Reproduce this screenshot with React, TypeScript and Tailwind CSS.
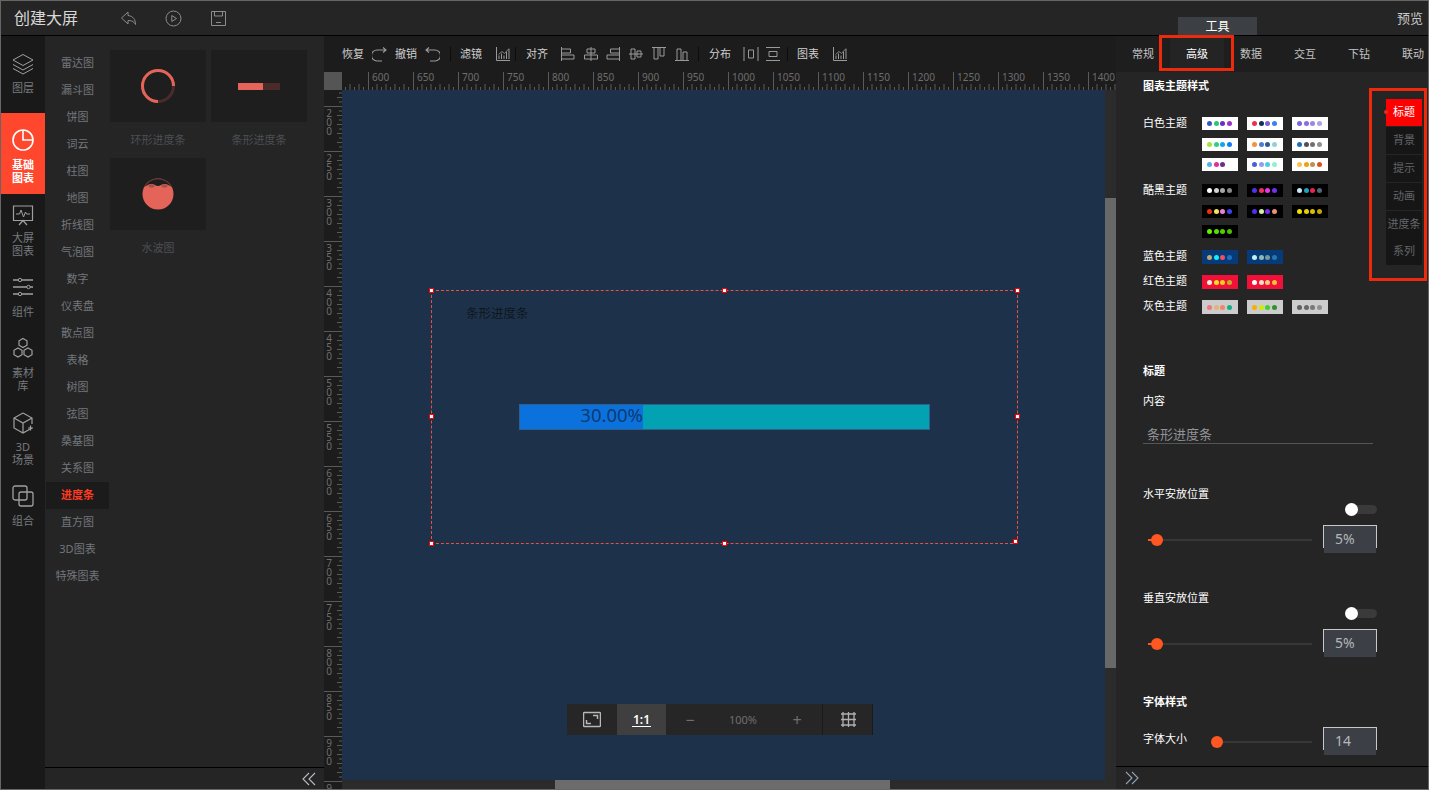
import React from "react";

type IconProps = { className?: string; children: React.ReactNode; size?: number; box?: number };
const Ico = ({ className = "", children, size = 16, box = 16 }: IconProps) => (
  <svg width={size} height={size} viewBox={`0 0 ${box} ${box}`} fill="none" stroke="currentColor" strokeWidth={1} className={`shrink-0 ${className}`}>
    {children}
  </svg>
);

const ChartIco = ({ className = "" }: { className?: string }) => (
  <Ico className={className}>
    <path d="M1.5 1v13.5H15" />
    <path d="M4 13V9.5M6.5 13V7.5M9 13V9.5M11.5 13V6M14 13V3" />
    <path d="M3.5 8.5 7 5.5l2.5 2L14 2.5" strokeWidth={0.8} />
  </Ico>
);

const Sep = ({ className }: { className: string }) => <div className={`h-[14px] w-px bg-[#0c0c0c] shrink-0 ${className}`} />;
const Tb = ({ children, className = "" }: { children: React.ReactNode; className?: string }) => (
  <span className={`text-[11px] leading-[14px] text-[#cfcfcf] shrink-0 ${className}`}>{children}</span>
);

const railItems: { label: string[]; cls: string; gap: string; active?: boolean; icon: React.ReactNode }[] = [
  {
    label: ["图层"], cls: "h-[77px] pt-[16px]", gap: "mt-[5px]",
    icon: (
      <Ico size={24} box={24}>
        <path d="M12 2.5 22 8l-10 5.5L2 8z" />
        <path d="M2 12.5 12 18l10-5.5" />
        <path d="M2 16.5 12 22l10-5.5" />
      </Ico>
    ),
  },
  {
    label: ["基础", "图表"], cls: "h-[81px] pt-[15px]", gap: "mt-[6px]", active: true,
    icon: (
      <Ico size={24} box={24} className="text-white">
        <circle cx="12" cy="12" r="10" strokeWidth={1.6} />
        <path d="M12 2v10h10" strokeWidth={1.6} />
      </Ico>
    ),
  },
  {
    label: ["大屏", "图表"], cls: "h-[72px] pt-[9px]", gap: "mt-[4px]",
    icon: (
      <Ico size={24} box={24}>
        <path d="M2.5 3h19v14.5h-19z" strokeWidth={1.2} />
        <path d="M5 11h3.5l1.5-4 2.5 7 2-5 1 2H19" />
        <path d="M8 22l4-4.5 4 4.5" strokeWidth={1.2} />
      </Ico>
    ),
  },
  {
    label: ["组件"], cls: "h-[64px] pt-[9px]", gap: "mt-[6px]",
    icon: (
      <Ico size={24} box={24}>
        <path d="M2 5h5.5M10.5 5H22M2 12h14M19 12h3M2 19h5.5M10.5 19H22" strokeWidth={1.3} />
        <circle cx="9" cy="5" r="1.7" />
        <circle cx="17.5" cy="12" r="1.7" />
        <circle cx="9" cy="19" r="1.7" />
      </Ico>
    ),
  },
  {
    label: ["素材", "库"], cls: "h-[75px] pt-[6px]", gap: "mt-[6px]",
    icon: (
      <Ico size={24} box={24}>
        <path d="M12 2.5l4 2.3v4.4l-4 2.3-4-2.3V4.800z" strokeWidth={1.2} />
        <path d="M7 12l4 2.300v4.400l-4 2.300-4-2.300v-4.400z" strokeWidth={1.2} />
        <path d="M17 12l4 2.300v4.400l-4 2.300-4-2.300v-4.400z" strokeWidth={1.2} />
      </Ico>
    ),
  },
  {
    label: ["3D", "场景"], cls: "h-[73px] pt-[6px]", gap: "mt-[5px]",
    icon: (
      <Ico size={24} box={24}>
        <path d="M12 2 21 7v6M21 17l-9 5-9-5V7l9-5" strokeWidth={1.2} />
        <path d="M3 7l9 5 9-5M12 12v10" strokeWidth={1.2} />
        <path d="M19.500 14.500v5M17 17h5" strokeWidth={1.2} />
      </Ico>
    ),
  },
  {
    label: ["组合"], cls: "flex-1 pt-[6px]", gap: "mt-[6px]",
    icon: (
      <Ico size={24} box={24}>
        <rect x="2" y="2" width="14" height="14" rx="2" strokeWidth={1.3} />
        <rect x="8" y="8" width="14" height="14" rx="2" strokeWidth={1.3} />
      </Ico>
    ),
  },
];

const chartTypes = ["雷达图", "漏斗图", "饼图", "词云", "柱图", "地图", "折线图", "气泡图", "数字", "仪表盘", "散点图", "表格", "树图", "弦图", "桑基图", "关系图", "进度条", "直方图", "3D图表", "特殊图表"];

const Ring = () => (
  <svg width="36" height="36" viewBox="0 0 36 36" fill="none">
    <circle cx="18" cy="18" r="15.500" stroke="#4a2b2a" strokeWidth="3" />
    <path d="M18 33.500A15.500 15.500 0 1 1 33.500 18" stroke="#e5645a" strokeWidth="3" />
  </svg>
);
const Wave = () => (
  <svg width="32" height="32" viewBox="0 0 32 32">
    <circle cx="16" cy="16" r="15.500" fill="#e5645a" />
    <path d="M2.600 8.500A15.500 15.500 0 0 1 29.400 8.500C27.500 8 25.500 6 22.500 6S18.500 8 16 8 12.500 6 9.500 6 4.500 8 2.600 8.500z" fill="#1e1e1e" />
    <ellipse cx="9.500" cy="8" rx="3" ry="1.700" fill="#a0534c" />
    <ellipse cx="22.500" cy="8" rx="3" ry="1.700" fill="#a0534c" />
    <path d="M2.600 8.500A15.500 15.500 0 0 1 29.400 8.500" fill="none" stroke="#6a3a37" />
  </svg>
);

const palette: string[][][] = [
  [
    ["#3f51c8", "#2fc47a", "#6b2fc0", "#a031c8"], ["#ee3050", "#12305a", "#7b5fd8", "#3d7ff0"], ["#7b68d8", "#8a6ee0", "#9a88e0", "#b0a0e8"],
    ["#a8e040", "#30d080", "#10a8e8", "#1080f0"], ["#f59040", "#4a80c8", "#2a5a98", "#90d0d8"], ["#1a70b8", "#505058", "#707078", "#909090"],
    ["#50b0e8", "#e03090", "#6a2f88"], ["#4a60d8", "#90a0f0", "#50c8e8", "#90f0d0"], ["#f8c050", "#f0a010", "#c09050", "#d85020"],
  ],
  [
    ["#ffffff", "#d0d0d0", "#a8a8a8", "#888888"], ["#5030f0", "#f03060", "#f030f0", "#7030f0"], ["#c8e8f8", "#20a0c0", "#f02050", "#506878"],
    ["#f03010", "#f8e060", "#f080d0", "#4040f0"], ["#5030f0", "#d0f0a0", "#7030f0", "#f09070"], ["#f0e000", "#e8d000", "#d8c000", "#c0a800"],
    ["#60f000", "#58e000", "#50d000", "#48c000"],
  ],
  [["#c0a870", "#10f0f8", "#f05060", "#2070c0"], ["#c0f0f0", "#90b8b8", "#789898", "#2878b0"]],
  [["#fff0d0", "#f8e020", "#e8d020", "#c0b020"], ["#ffffff", "#ffe0c0", "#ffd080", "#ffc040"]],
  [["#f07878", "#e8b080", "#f08868", "#10b080"], ["#f8b000", "#c8f000", "#40d030", "#309030"], ["#606060", "#686868", "#787878", "#909090"]],
];
const themes = [
  { name: "白色主题", bg: "bg-white", cls: "h-[54px]", sw: "h-[13px]" },
  { name: "酷黑主题", bg: "bg-black", cls: "mt-[13px] h-[54px]", sw: "h-[13px]" },
  { name: "蓝色主题", bg: "bg-[#063a78]", cls: "mt-[12px] h-[14px]", sw: "h-[14px]" },
  { name: "红色主题", bg: "bg-[#f01038]", cls: "mt-[11px] h-[14px]", sw: "h-[14px]" },
  { name: "灰色主题", bg: "bg-[#cccccc]", cls: "mt-[11px] h-[14px]", sw: "h-[14px]" },
];

const Toggle = ({ className }: { className: string }) => (
  <div className={`flex justify-end w-[234px] ${className}`}>
    <div className="relative w-[25px] h-[13px] flex items-center">
      <div className="w-full h-[9px] rounded-full bg-[#3a3a3a]" />
      <div className="absolute -left-[7px] top-0 w-[13px] h-[13px] rounded-full bg-white" />
    </div>
  </div>
);
const NumBox = ({ value }: { value: string }) => (
  <div className="w-[54px] shrink-0 flex flex-col">
    <div className="h-[23px] bg-[#3c3f45] border-t border-x border-[#c8c8c8] pl-[11px] text-[14px] leading-[26px] text-[#b4b8bc]">{value}</div>
    <div className="h-[5px] mx-px bg-[#3c3f45]" />
  </div>
);
const Slider = ({ className, knob, fill }: { className: string; knob: string; fill?: boolean }) => (
  <div className={`relative h-[30px] flex items-center ${className}`}>
    <div className="w-full h-[2px] bg-[#373737]" />
    {fill && <div className="absolute left-0 top-[14px] w-[9px] h-[2px] bg-[#ff5722]" />}
    <div className={`absolute top-[9px] w-[12px] h-[12px] rounded-full bg-[#ff5722] ${knob}`} />
  </div>
);

const sideNav = ["背景", "提示", "动画"];

const majorsTop = Array.from({ length: 17 }, (_, i) => 600 + i * 50);
const majorsLeft = Array.from({ length: 16 }, (_, i) => 200 + i * 50);

const TopRuler = () => {
  const ticks: React.ReactNode[] = [];
  for (let i = 0; i < 180; i++) {
    const x = 26 - 27 + i * 4.5;
    if (x < 0 || i % 10 === 6) continue;
    const long = i % 2 === 0;
    ticks.push(<line key={i} x1={x} x2={x} y1={long ? 12 : 15} y2={18} stroke="#5a5a5a" />);
  }
  return (
    <svg width="774" height="18" className="block">
      {ticks}
      {majorsTop.map((v) => {
        const x = 26 + (v - 600) * 0.9 + 0.5;
        return (
          <g key={v}>
            <line x1={x} x2={x} y1={0} y2={18} stroke="#5a5a5a" />
            <text x={x + 3.5} y={8.5} fontSize={10} fill="#6e6e6e" fontFamily="'Noto Sans', sans-serif">{v}</text>
          </g>
        );
      })}
    </svg>
  );
};
const LeftRuler = () => {
  const ticks: React.ReactNode[] = [];
  for (let i = 0; i < 160; i++) {
    const y = -29 + i * 4.5 + 0.5;
    if (y < 0 || i % 10 === 0) continue;
    const long = i % 2 === 0;
    ticks.push(<line key={i} y1={y} y2={y} x1={long ? 13 : 15} x2={18} stroke="#5a5a5a" />);
  }
  return (
    <svg width="18" height="700" className="block">
      {ticks}
      {majorsLeft.map((v) => {
        const y = 16 + (v - 200) * 0.9 + 0.5;
        return (
          <g key={v}>
            <line y1={y} y2={y} x1={0} x2={18} stroke="#5a5a5a" />
            {String(v).split("").map((d, i) => (
              <text key={i} x={5} y={y + 10.5 + i * 9} fontSize={10} textAnchor="middle" fill="#6e6e6e" fontFamily="'Noto Sans', sans-serif">{d}</text>
            ))}
          </g>
        );
      })}
    </svg>
  );
};

const Handle = ({ className }: { className: string }) => (
  <div className={`absolute w-[5px] h-[5px] bg-white border border-[#ff0000] ${className}`} />
);

export default function App() {
  return (
    <div className="w-[1429px] h-[790px] border border-[#666666] bg-[#252525] flex flex-col overflow-hidden relative font-['Noto_Sans','Noto_Sans_CJK_SC',sans-serif]">
      {/* Header */}
      <header className="h-[35px] shrink-0 border-b border-black bg-[#252525] flex items-center text-[#8c8c8c]">
        <div className="ml-[13px] w-[64px] text-[16px] leading-[20px] text-[#d8d8d8]">创建大屏</div>
        <Ico size={17} box={17} className="ml-[42px]">
          <path d="M8 2 1.500 8 8 14v-3.500c3 0 5.500.5 7.500 4 0-5-2.500-8.500-7.500-9z" />
        </Ico>
        <Ico size={17} box={17} className="ml-[28px]">
          <circle cx="8.500" cy="8.500" r="7.500" />
          <path d="M6.800 5.500 11.500 8.500 6.800 11.500z" />
        </Ico>
        <Ico size={15} box={15} className="ml-[29px]">
          <path d="M.5.500h14v14H.5z" />
          <path d="M3.500.500v4.500h8V.500M5 11.500h5" />
        </Ico>
        <div className="flex-1" />
        <div className="self-end mr-[140px] w-[79px] h-[18px] bg-[#3c3f43] text-[12px] leading-[19px] text-white text-center">工具</div>
        <div className="mr-[5px] text-[13px] leading-[18px] text-[#c8c8c8] -mt-[1px]">预览</div>
      </header>

      <div className="flex-1 flex min-h-0">
        {/* Rail */}
        <nav className="w-[44px] shrink-0 bg-[#191919] flex flex-col">
          {railItems.map((it) => (
            <div key={it.label.join("")} className={`${it.cls} flex flex-col items-center shrink-0 ${it.active ? "bg-[#ff472d] text-white" : "text-[#a0a0a0]"}`}>
              {it.icon}
              <div className={`${it.gap} text-[11px] leading-[13px] text-center ${it.active ? "font-semibold text-white" : "text-[#777a7e]"}`}>
                {it.label.map((l) => <div key={l}>{l}</div>)}
              </div>
            </div>
          ))}
        </nav>

        {/* Chart library */}
        <aside className="w-[279px] shrink-0 bg-[#252525] flex flex-col">
          <div className="flex-1 flex min-h-0">
            <ul className="w-[64px] shrink-0 pt-[14px] pl-px">
              {chartTypes.map((c) => (
                <li key={c} className={`h-[27px] flex items-center justify-center text-[11px] ${c === "进度条" ? "bg-[#1b1b1b] text-[#ff3a20] font-semibold" : "text-[#73777c]"}`}>{c}</li>
              ))}
            </ul>
            <div className="pt-[14px] pl-px grid grid-cols-[96px_96px] gap-x-[5px] auto-rows-[108px]">
              <div>
                <div className="h-[72px] bg-[#1e1e1e] flex items-center justify-center"><Ring /></div>
                <div className="mt-[11px] text-[11px] leading-[14px] text-center text-[#4c4f53]">环形进度条</div>
              </div>
              <div>
                <div className="h-[72px] bg-[#1e1e1e] flex items-center justify-center">
                  <div className="w-[42px] h-[7px] flex">
                    <div className="w-[25px] bg-[#e5645a]" />
                    <div className="flex-1 bg-[#4a2b2a]" />
                  </div>
                </div>
                <div className="mt-[11px] text-[11px] leading-[14px] text-center text-[#4c4f53]">条形进度条</div>
              </div>
              <div>
                <div className="h-[72px] bg-[#1e1e1e] flex items-center justify-center"><Wave /></div>
                <div className="mt-[11px] text-[11px] leading-[14px] text-center text-[#4c4f53]">水波图</div>
              </div>
            </div>
          </div>
          <div className="h-[22px] shrink-0 border-t border-black flex justify-end items-center pr-[8px] text-[#b8bcc0]">
            <Ico size={14} box={14}>
              <path d="M7 1 1 7l6 6M13 1 7 7l6 6" strokeWidth={1.1} />
            </Ico>
          </div>
        </aside>

        {/* Canvas column */}
        <main className="w-[792px] shrink-0 flex flex-col min-h-0 bg-[#1c1c1c]">
          <div className="h-[36px] shrink-0 flex items-center pl-[18px] text-[#9a9a9a]">
            <Tb>恢复</Tb>
            <Ico size={15} className="ml-[8px]" box={15}><path d="M14 3H5a4.500 4.500 0 0 0 0 11h5M11 .500 14 3l-3 2.500" strokeWidth={1.1} /></Ico>
            <Tb className="ml-[8px]">撤销</Tb>
            <Ico size={15} className="ml-[8px]" box={15}><path d="M1 3h9a4.500 4.500 0 0 1 0 11H5M4 .500 1 3l3 2.500" strokeWidth={1.1} /></Ico>
            <Sep className="ml-[10px]" />
            <Tb className="ml-[9px]">滤镜</Tb>
            <ChartIco className="ml-[13px]" />
            <Sep className="ml-[4px]" />
            <Tb className="ml-[10px]">对齐</Tb>
            <Ico className="ml-[12px]"><path d="M1.500 1v14M1.500 3h9v4h-9M1.500 9h12.500v4H1.500" /></Ico>
            <Ico className="ml-[7px]"><path d="M8 1v14M4 3h8v4H4zM1.500 9h13v4h-13z" /></Ico>
            <Ico className="ml-[6px]"><path d="M14.500 1v14M14.500 3h-9v4h9M14.500 9H2v4h12.500" /></Ico>
            <Ico className="ml-[7px]"><path d="M1 8h14M3 3h4v10H3zM9 5h4v6H9z" /></Ico>
            <Ico className="ml-[7px]"><path d="M1 1.500h14M3 1.500h4V13H3zM9 1.500h4V10H9z" /></Ico>
            <Ico className="ml-[7px]"><path d="M1 14.500h14M3 14.500h4V3H3zM9 14.500h4V6H9z" /></Ico>
            <Sep className="ml-[8px]" />
            <Tb className="ml-[10px]">分布</Tb>
            <Ico className="ml-[12px]"><path d="M1 1v14M15 1v14M5.500 4h5v8h-5z" /></Ico>
            <Ico className="ml-[6px]"><path d="M1 1.500h14M1 14.500h14M4 5.500h8v5H4z" /></Ico>
            <Sep className="ml-[6px]" />
            <Tb className="ml-[9px]">图表</Tb>
            <ChartIco className="ml-[13px]" />
          </div>
          <div className="h-[18px] shrink-0 flex">
            <div className="w-[18px] h-[18px] bg-[#555555]" />
            <TopRuler />
          </div>
          <div className="flex-1 flex min-h-0">
            <div className="w-[18px] shrink-0 overflow-hidden"><LeftRuler /></div>
            <div className="flex-1 flex flex-col min-w-0">
              <div className="flex-1 flex min-h-0">
                <div className="flex-1 bg-[#1d324a] relative overflow-hidden">
                  {/* Selected chart on the free canvas */}
                  <div className="absolute left-[89px] top-[200px] w-[587px] h-[254px] border border-dashed border-[#e8503f]">
                    <div className="absolute left-[34px] top-[15px] text-[12.5px] leading-[16px] text-[#10161e]">条形进度条</div>
                    <div className="absolute left-[87px] top-[113px] w-[411px] h-[26px] border border-[#2f5f8d] flex bg-[#03a2b2]">
                      <div className="w-[123px] bg-[#0b72dd] flex justify-end items-center text-[18.5px] leading-[20px] text-[#0d3a70] pb-[5px]">30.00%</div>
                    </div>
                    <Handle className="-left-[3px] -top-[3px]" />
                    <Handle className="left-[290px] -top-[3px]" />
                    <Handle className="-right-[3px] -top-[3px]" />
                    <Handle className="-left-[3px] top-[123px]" />
                    <Handle className="-right-[3px] top-[123px]" />
                    <Handle className="-left-[3px] -bottom-[3px]" />
                    <Handle className="left-[290px] -bottom-[3px]" />
                    <Handle className="-right-[1px] -bottom-[1px]" />
                  </div>
                  {/* Zoom control */}
                  <div className="absolute left-[225px] top-[614px] w-[306px] h-[31px] bg-[#262626] flex items-center text-[#6f6f6f]">
                    <div className="w-[50px] h-full flex items-center justify-center text-[#b8b8b8]">
                      <Ico size={18} box={18}>
                        <rect x=".5" y="1.500" width="17" height="14" rx="1" strokeWidth={1.5} />
                        <path d="M3.500 9v3.500H8M14.500 8V4.500H10" strokeWidth={1.5} />
                      </Ico>
                    </div>
                    <div className="w-[49px] h-full bg-[#3f3f3f] flex items-center justify-center">
                      <span className="text-[12px] leading-[13px] font-semibold text-white border-b border-white px-[1px]">1:1</span>
                    </div>
                    <div className="w-[48px] text-center text-[16px] leading-[16px]">−</div>
                    <div className="w-[58px] text-center text-[11px] leading-[16px]">100%</div>
                    <div className="w-[50px] text-center text-[16px] leading-[16px]">+</div>
                    <div className="h-full w-[51px] border-x border-[#1a1a1a] flex items-center justify-center pl-px text-[#b0b0b0]">
                      <Ico size={15} box={15}>
                        <path d="M2 0v15M7.500 0v15M13 0v15M0 2h15M0 7.500h15M0 13h15" strokeWidth={1.3} />
                      </Ico>
                    </div>
                  </div>
                </div>
                <div className="w-[11px] shrink-0 bg-[#2b2b2b] pt-[108px]">
                  <div className="h-[470px] bg-[#686868]" />
                </div>
              </div>
              <div className="h-[9px] shrink-0 bg-[#2b2b2b] pl-[213px]">
                <div className="w-[335px] h-full bg-[#6c6c6c]" />
              </div>
            </div>
          </div>
        </main>

        {/* Properties */}
        <section className="flex-1 min-w-0 flex flex-col relative bg-[#252525]">
          <div className="h-[36px] shrink-0 bg-[#1e1e1e] flex">
            {["常规", "高级", "数据", "交互", "下钻", "联动"].map((t) => (
              <div key={t} className={`w-[54px] shrink-0 flex items-center justify-center text-[11px] ${t === "高级" ? "bg-[#242424] text-white" : "text-[#c4c4c4]"}`}>{t}</div>
            ))}
          </div>
          <div className="flex-1 min-h-0 pl-[27px] overflow-hidden text-[11px] leading-[12px] text-white">
            <div className="mt-[8px] font-semibold">图表主题样式</div>
            <div className="mt-[25px]">
              {themes.map((t, ti) => (
                <div key={t.name} className={`flex ${t.cls}`}>
                  <div className="w-[59px] shrink-0 leading-[11px]">{t.name}</div>
                  <div className="grid grid-cols-[36px_36px_36px] gap-x-[9px] gap-y-[7.5px] content-start">
                    {palette[ti].map((dots, i) => (
                      <div key={i} className={`${t.bg} ${t.sw} flex items-center gap-[1.5px] pl-[5px]`}>
                        {dots.map((c, k) => (
                          <span key={k} className="w-[5px] h-[5px] rounded-full" style={{ backgroundColor: c }} />
                        ))}
                      </div>
                    ))}
                  </div>
                </div>
              ))}
            </div>
            <div className="mt-[51px] font-semibold">标题</div>
            <div className="mt-[18px]">内容</div>
            <div className="mt-[17px] w-[230px] h-[20px] border-b border-[#555555] pl-[4px] text-[13px] leading-[20px] text-[#8f9296]">条形进度条</div>
            <div className="mt-[44px]">水平安放位置</div>
            <Toggle className="mt-[3px]" />
            <div className="mt-[9px] flex w-[234px]">
              <Slider className="ml-[5px] w-[164px]" knob="left-[3px]" fill />
              <div className="ml-[11px]"><NumBox value="5%" /></div>
            </div>
            <div className="mt-[37px]">垂直安放位置</div>
            <Toggle className="mt-[3px]" />
            <div className="mt-[9px] flex w-[234px]">
              <Slider className="ml-[5px] w-[164px]" knob="left-[3px]" fill />
              <div className="ml-[11px]"><NumBox value="5%" /></div>
            </div>
            <div className="mt-[37px] font-semibold">字体样式</div>
            <div className="mt-[19px] flex w-[234px]">
              <div className="w-[44px] mt-[6px] shrink-0">字体大小</div>
              <Slider className="ml-[24px] w-[101px]" knob="left-0" />
              <div className="ml-[11px]"><NumBox value="14" /></div>
            </div>
          </div>
          <div className="h-[23px] shrink-0 border-t border-black flex items-center pl-[9px] text-[#8fa4b4]">
            <Ico size={14} box={14}>
              <path d="M1 1l6 6-6 6M7 1l6 6-6 6" strokeWidth={1.1} />
            </Ico>
          </div>

          {/* Side anchors */}
          <div className="absolute left-[270px] top-[63px] w-[36px] flex flex-col text-[11px]">
            <div className="absolute -left-[2px] top-[11px] w-[4px] h-[4px] rounded-full bg-[#e03020]" />
            <div className="h-[27px] bg-[#ff0000] text-white flex items-center justify-center">标题</div>
            {sideNav.map((s) => (
              <div key={s} className="mt-px h-[27px] bg-[#161616] text-[#63666a] flex items-center justify-center">{s}</div>
            ))}
            <div className="mt-px h-[27px] bg-[#161616] text-[#63666a] flex items-center justify-center whitespace-nowrap">进度条</div>
            <div className="h-[27px] bg-[#161616] text-[#63666a] flex items-center justify-center">系列</div>
          </div>
          {/* Annotation frames */}
          <div className="absolute left-[43px] -top-[1px] w-[75px] h-[36px] border-[3px] border-[#ee2a0c]" />
          <div className="absolute left-[253px] top-[52px] w-[58px] h-[193px] border-[3px] border-[#ee2a0c]" />
        </section>
      </div>
    </div>
  );
}
